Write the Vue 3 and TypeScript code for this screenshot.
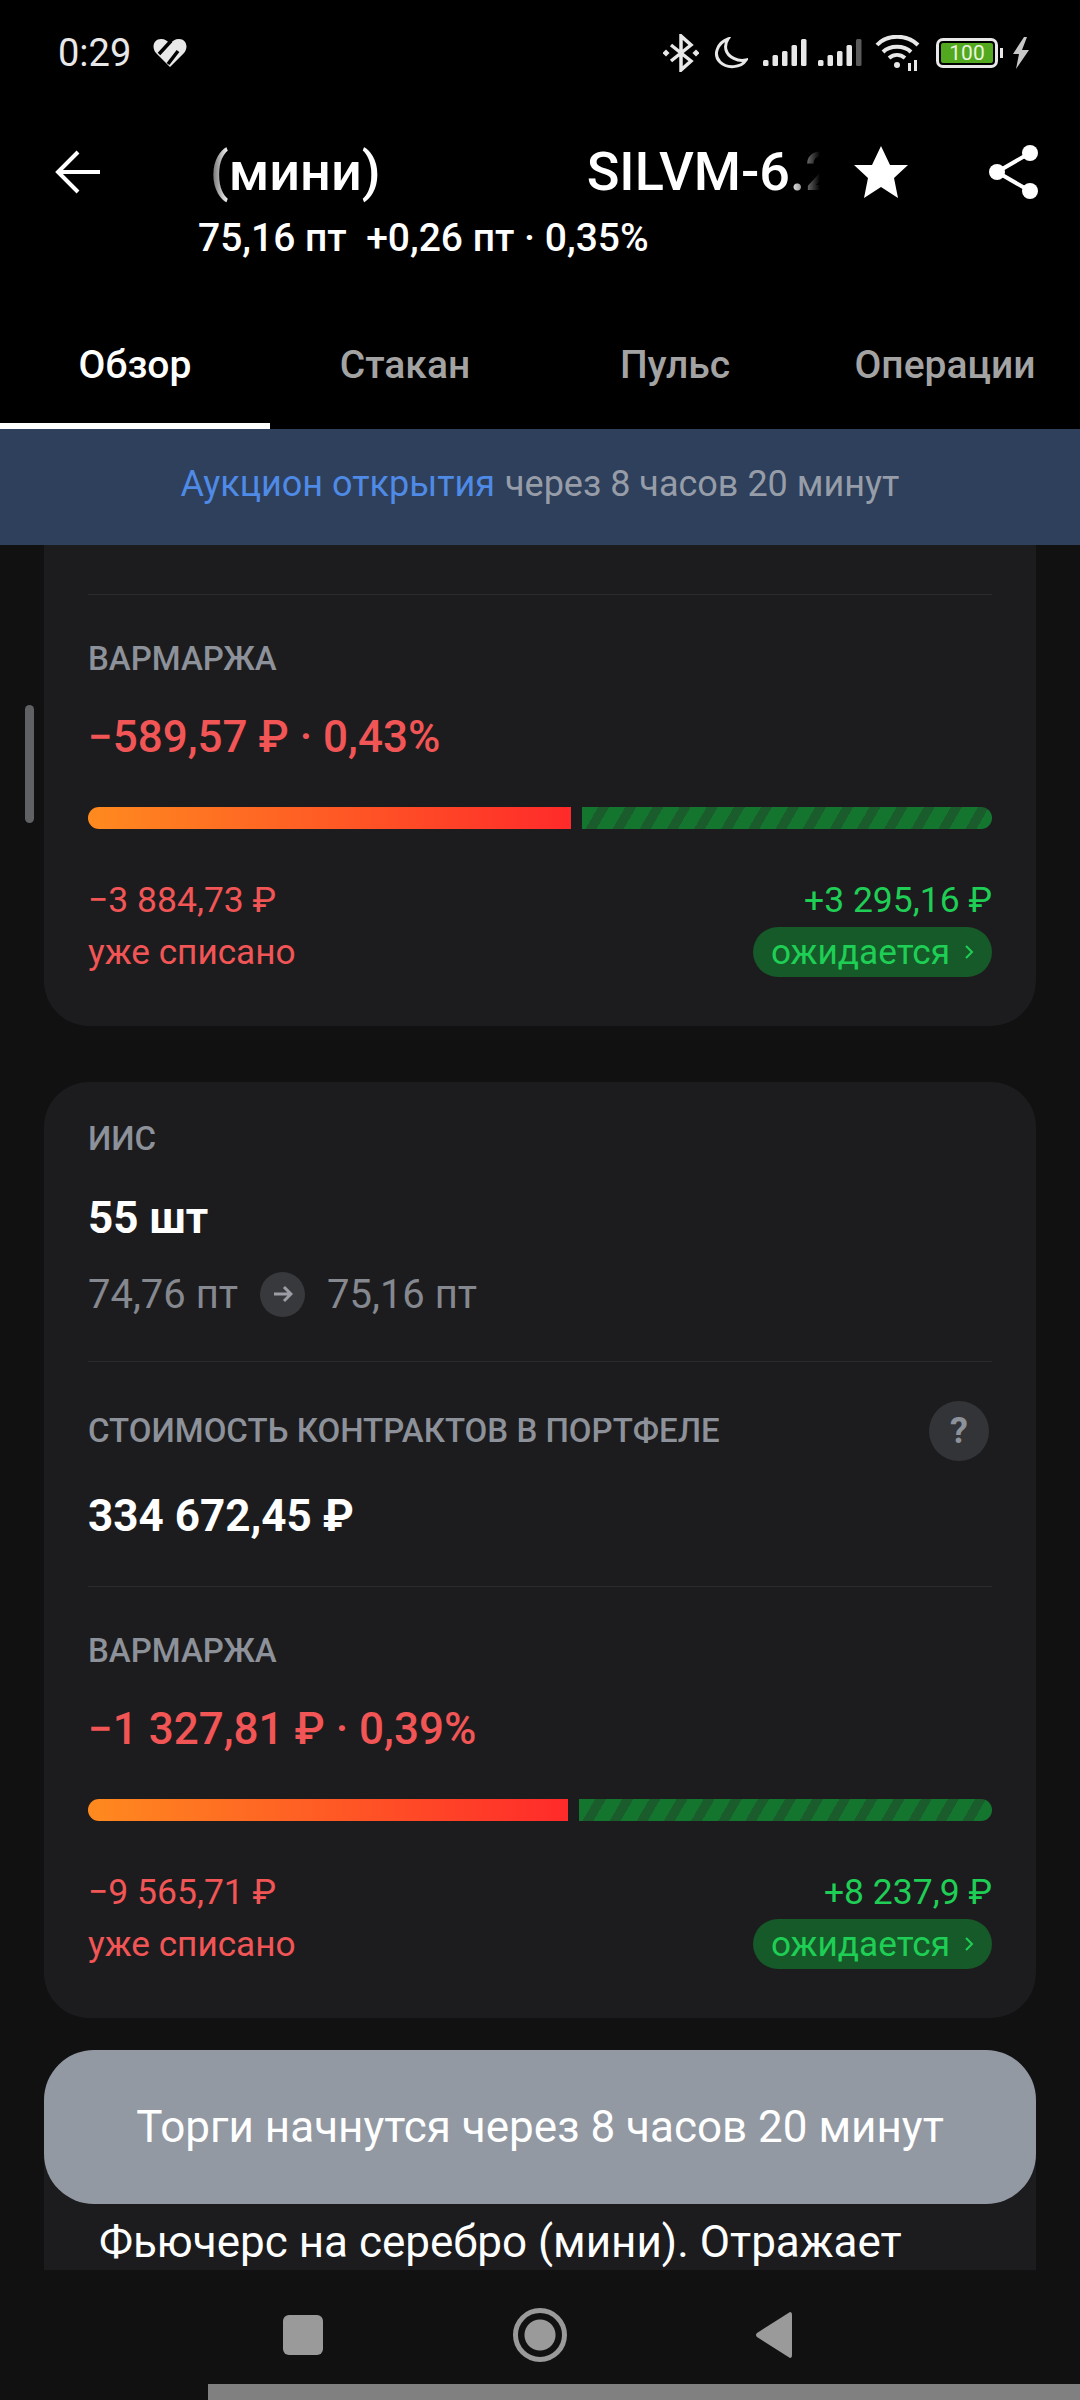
<script setup lang="ts">
interface Margin {
  value: string
  lost: string
  expected: string
  lostWidth: number
}

const tabs = ['Обзор', 'Стакан', 'Пульс', 'Операции']

// bar widths are in px, the green part takes what's left
const firstMargin: Margin = {
  value: '−589,57 ₽ · 0,43%',
  lost: '−3 884,73 ₽',
  expected: '+3 295,16 ₽',
  lostWidth: 483,
}

const secondMargin: Margin = {
  value: '−1 327,81 ₽ · 0,39%',
  lost: '−9 565,71 ₽',
  expected: '+8 237,9 ₽',
  lostWidth: 480,
}

const margins = { first: firstMargin, second: secondMargin }

// signal bars, tallest last
const signalHeights = [6, 11, 15, 21, 27]
</script>

<template>
  <div class="screen">
    <div class="status">
      <div class="status__left">
        <span class="status__time">0:29</span>
        <svg class="status__heart" width="34" height="28" viewBox="0 0 34 28">
          <path fill="#e8e8e8" d="M17 28 L3 14 C-2 8 1 0 8 0 C12 0 15 2 17 5 C19 2 22 0 26 0 C33 0 36 8 31 14 Z" />
          <path fill="none" stroke="#000" stroke-width="3.5" d="M6 15 L18 2 M15 25 L25 12" />
        </svg>
      </div>
      <div class="status__right">
        <svg width="36" height="38" viewBox="0 0 36 38" fill="none" stroke="#e8e8e8" stroke-width="3.5">
          <path d="M8 11 L28 27 L18 36 V2 L28 11 L8 27" />
          <rect x="0.5" y="16.5" width="5" height="5" transform="rotate(45 3 19)" fill="#e8e8e8" stroke="none" />
          <rect x="30.5" y="16.5" width="5" height="5" transform="rotate(45 33 19)" fill="#e8e8e8" stroke="none" />
        </svg>
        <svg width="34" height="32" viewBox="0 0 34 32" fill="none" stroke="#e8e8e8" stroke-width="3">
          <path d="M14 2 C3 6 -1 18 6 25 C13 32 27 31 32 23 C24 25 14 20 12 13 C11 9 12 5 14 2 Z" />
        </svg>
        <svg width="44" height="27" viewBox="0 0 44 27" fill="#e8e8e8">
          <rect v-for="(h, i) in signalHeights" :key="i" :x="i * 9.5" :y="27 - h" width="5.5" :height="h" rx="1.5" />
        </svg>
        <svg class="status__sim2" width="44" height="27" viewBox="0 0 44 27" fill="#e8e8e8">
          <rect
            v-for="(h, i) in signalHeights"
            :key="i"
            :x="i * 9.5"
            :y="27 - h"
            width="5.5"
            :height="h"
            rx="1.5"
            :fill="i === 4 ? '#5a5a5a' : '#e8e8e8'"
          />
        </svg>
        <svg class="status__wifi" width="46" height="36" viewBox="0 0 46 36" fill="none" stroke="#e8e8e8" stroke-width="4">
          <path d="M2 10 C12 -1 32 -1 43 10" />
          <path d="M8 17 C15 10 29 10 36 17" />
          <path d="M14 23 C19 19 25 19 30 23" />
          <circle cx="22" cy="30" r="3" fill="#e8e8e8" stroke="none" />
          <rect x="33" y="28" width="3" height="8" fill="#e8e8e8" stroke="none" />
          <rect x="39" y="25" width="3" height="11" fill="#e8e8e8" stroke="none" />
        </svg>
        <div class="battery">
          <div class="battery__body"><span class="battery__fill">100</span></div>
          <span class="battery__nub"></span>
        </div>
        <svg class="status__bolt" width="18" height="32" viewBox="0 0 18 32" fill="#c8c8c8">
          <path d="M12 0 L1 17 H7 L4 32 L17 13 H10 L15 0 Z" />
        </svg>
      </div>
    </div>

    <header class="header">
      <div class="header__top">
        <svg class="header__back" width="45" height="44" viewBox="0 0 45 44" fill="none" stroke="#fff" stroke-width="4">
          <path d="M23 2 L3 22 L23 42" />
          <path d="M3 22 H45" />
        </svg>
        <div class="header__title">
          <span>(мини)</span>
          <span>SILVM-6.26</span>
        </div>
        <svg class="header__star" width="54" height="52" viewBox="0 0 54 52" fill="#fff">
          <path d="M27 0 L36 19 H54 L40 32 L44 52 L27 41 L10 52 L14 32 L0 19 H18 Z" />
        </svg>
        <svg class="header__share" width="50" height="56" viewBox="0 0 50 56" fill="#fff" stroke="#fff">
          <path d="M41 9 L8 28 L41 47" fill="none" stroke-width="4" />
          <circle cx="41" cy="9" r="8" stroke="none" />
          <circle cx="8" cy="28" r="8" stroke="none" />
          <circle cx="41" cy="47" r="8" stroke="none" />
        </svg>
      </div>
      <div class="header__price">75,16 пт&nbsp; +0,26 пт · 0,35%</div>
    </header>

    <nav class="tabs">
      <div v-for="(tab, i) in tabs" :key="tab" class="tabs__item" :class="{ 'tabs__item--active': i === 0 }">
        {{ tab }}
      </div>
    </nav>

    <div class="banner"><span class="banner__link">Аукцион открытия</span> через 8 часов 20 минут</div>

    <main class="content">
      <span class="scrollbar"></span>

      <section class="card card--first">
        <div class="margin margin--first">
          <div class="label">ВАРМАРЖА</div>
          <div class="margin__value">{{ margins.first.value }}</div>
          <div class="bar">
            <span class="bar__lost" :style="{ width: margins.first.lostWidth + 'px' }"></span>
            <span class="bar__expected"></span>
          </div>
          <div class="margin__row">
            <span class="red">{{ margins.first.lost }}</span>
            <span class="green">{{ margins.first.expected }}</span>
          </div>
          <div class="margin__row margin__row--second">
            <span class="red">уже списано</span>
            <span class="pill">ожидается
              <svg width="10" height="16" viewBox="0 0 10 16" fill="none" stroke="#1fce55" stroke-width="2"><path d="M2 2 L8 8 L2 14" /></svg>
            </span>
          </div>
        </div>
      </section>

      <section class="card">
        <div class="position">
          <div class="label">ИИС</div>
          <div class="position__count">55 шт</div>
          <div class="position__prices">
            <span>74,76 пт</span>
            <span class="position__arrow">
              <svg width="20" height="18" viewBox="0 0 20 18" fill="none" stroke="#9a9da3" stroke-width="3"><path d="M1 9 H18 M11 2 L18 9 L11 16" /></svg>
            </span>
            <span>75,16 пт</span>
          </div>
        </div>
        <div class="cost">
          <div class="cost__head">
            <span class="label">СТОИМОСТЬ КОНТРАКТОВ В ПОРТФЕЛЕ</span>
            <span class="cost__help">?</span>
          </div>
          <div class="cost__value">334 672,45 ₽</div>
        </div>
        <div class="margin margin--first">
          <div class="label">ВАРМАРЖА</div>
          <div class="margin__value">{{ margins.second.value }}</div>
          <div class="bar">
            <span class="bar__lost" :style="{ width: margins.second.lostWidth + 'px' }"></span>
            <span class="bar__expected"></span>
          </div>
          <div class="margin__row">
            <span class="red">{{ margins.second.lost }}</span>
            <span class="green">{{ margins.second.expected }}</span>
          </div>
          <div class="margin__row margin__row--second">
            <span class="red">уже списано</span>
            <span class="pill">ожидается
              <svg width="10" height="16" viewBox="0 0 10 16" fill="none" stroke="#1fce55" stroke-width="2"><path d="M2 2 L8 8 L2 14" /></svg>
            </span>
          </div>
        </div>
      </section>

      <section class="card card--about">
        <p class="about">Фьючерс на серебро (мини). Отражает</p>
      </section>

      <div class="toast">Торги начнутся через 8 часов 20 минут</div>
    </main>

    <footer class="navbar">
      <span class="navbar__square"></span>
      <span class="navbar__circle"></span>
      <svg width="36" height="46" viewBox="0 0 36 46" fill="#9a9a9a">
        <path d="M34 0 Q36 0 36 3 V43 Q36 46 34 46 L1 25 Q-1 23 1 21 Z" />
      </svg>
      <span class="navbar__strip"></span>
    </footer>
  </div>
</template>

<style>
body {
  margin: 0;
  background: #000;
}
</style>

<style scoped>
.screen {
  width: 1080px;
  height: 2400px;
  display: flex;
  flex-direction: column;
  overflow: hidden;
  background: #000;
  color: #fff;
  font-family: Roboto, "Noto Sans", sans-serif;
}

.status {
  height: 105px;
  flex: none;
  display: flex;
  justify-content: space-between;
  align-items: center;
  padding: 0 50px 0 58px;
  box-sizing: border-box;
}

.status__left,
.status__right {
  display: flex;
  align-items: center;
}

.status__time {
  font-size: 38px;
  color: #e8e8e8;
}

.status__heart {
  margin-left: 22px;
}

.status__right {
  gap: 15px;
}

.status__sim2 {
  margin-left: -4px;
}

.status__wifi {
  margin-left: -2px;
}

.status__bolt {
  margin-left: -6px;
}

.battery {
  display: flex;
  align-items: center;
  gap: 2px;
}

.battery__body {
  width: 62px;
  height: 30px;
  box-sizing: border-box;
  border: 3px solid #e8e8e8;
  border-radius: 7px;
  padding: 2px;
  display: flex;
}

.battery__fill {
  flex: 1;
  background: #52a81f;
  border-radius: 2px;
  font-size: 21px;
  line-height: 20px;
  text-align: center;
  color: #e8f5dc;
}

.battery__nub {
  width: 3px;
  height: 10px;
  background: #e8e8e8;
}

.header {
  height: 175px;
  flex: none;
  box-sizing: border-box;
  padding-top: 37px;
}

.header__top {
  height: 60px;
  display: flex;
  align-items: center;
  padding-left: 55px;
}

.header__back {
  flex: none;
}

.header__title {
  width: 621px;
  margin: -2px 0 0 99px;
  padding-left: 11px;
  box-sizing: border-box;
  display: flex;
  gap: 206px;
  overflow: hidden;
  white-space: nowrap;
  font-size: 54px;
  font-weight: 500;
  mask-image: linear-gradient(to right, transparent 0, #000 30px, #000 590px, transparent 621px);
}

.header__star {
  flex: none;
  margin-left: 34px;
}

.header__share {
  flex: none;
  margin-left: 81px;
}

.header__price {
  margin-top: 14px;
  padding-left: 198px;
  font-size: 39px;
  line-height: 44px;
  font-weight: 500;
  white-space: nowrap;
}

.tabs {
  height: 149px;
  flex: none;
  display: grid;
  grid-template-columns: repeat(4, 1fr);
}

.tabs__item {
  padding-top: 62px;
  text-align: center;
  font-size: 39px;
  line-height: 46px;
  font-weight: 500;
  color: #a3a3a3;
  box-sizing: border-box;
}

.tabs__item--active {
  color: #fff;
  border-bottom: 6px solid #fff;
}

.banner {
  height: 116px;
  flex: none;
  box-sizing: border-box;
  padding-bottom: 6px;
  display: flex;
  align-items: center;
  justify-content: center;
  gap: 10px;
  background: #2e405b;
  color: #979da8;
  font-size: 36px;
}

.banner__link {
  color: #4f8ae6;
}

.content {
  flex: 1;
  min-height: 0;
  position: relative;
  overflow: hidden;
  background: #111112;
  display: flex;
  flex-direction: column;
  gap: 56px;
}

.scrollbar {
  position: absolute;
  left: 25px;
  top: 160px;
  width: 9px;
  height: 118px;
  border-radius: 5px;
  background: #606165;
}

.card {
  flex: none;
  margin: 0 44px;
  padding: 0 44px;
  border-radius: 45px;
  background: #1c1c1e;
}

.card--first {
  margin-top: -60px;
  padding-top: 109px;
}

.card--about {
  padding: 148px 0 60px 55px;
  border-radius: 45px 45px 0 0;
}

.label {
  font-size: 33px;
  line-height: 30px;
  font-weight: 500;
  color: #8d9199;
}

.margin,
.cost {
  border-top: 1px solid #2b2b2d;
}

.margin {
  padding: 49px 0 48px;
}

.margin--first {
  padding-bottom: 49px;
}

.margin__value {
  margin-top: 38px;
  font-size: 44px;
  line-height: 50px;
  font-weight: 500;
  color: #f25555;
}

.bar {
  margin-top: 45px;
  height: 22px;
  display: flex;
  gap: 11px;
}

.bar__lost {
  flex: none;
  border-radius: 11px 0 0 11px;
  background: linear-gradient(to right, #ff8a1f, #ff2a2a);
}

.bar__expected {
  flex: 1;
  border-radius: 0 11px 11px 0;
  background: repeating-linear-gradient(120deg, #14752f 0, #14752f 14px, #1a5c2b 14px, #1a5c2b 23.5px);
}

.margin__row {
  margin-top: 51px;
  height: 40px;
  display: flex;
  justify-content: space-between;
  align-items: center;
  font-size: 35.5px;
}

.margin__row--second {
  margin-top: 7px;
  height: 50px;
  font-size: 35.2px;
}

.red {
  color: #f25555;
}

.green {
  color: #1fce55;
}

.pill {
  height: 50px;
  box-sizing: border-box;
  display: flex;
  align-items: center;
  gap: 14px;
  padding: 0 18px;
  border-radius: 25px;
  background: #155a28;
  color: #1fce55;
  font-size: 35.2px;
}

.position {
  padding: 42px 0 47px;
}

.position__count {
  margin-top: 44px;
  font-size: 44px;
  line-height: 40px;
  font-weight: 700;
}

.position__prices {
  margin-top: 36px;
  height: 40px;
  display: flex;
  align-items: center;
  gap: 22px;
  font-size: 40px;
  color: #85888f;
}

.position__arrow {
  width: 45px;
  height: 45px;
  border-radius: 50%;
  background: #38393c;
  display: flex;
  align-items: center;
  justify-content: center;
}

.cost {
  padding: 39px 0 50px;
}

.cost__head {
  height: 60px;
  display: flex;
  justify-content: space-between;
  align-items: center;
}

.cost__help {
  width: 60px;
  height: 60px;
  margin-right: 3px;
  border-radius: 50%;
  background: #333437;
  color: #8d9199;
  font-size: 36px;
  font-weight: 700;
  display: flex;
  align-items: center;
  justify-content: center;
}

.cost__value {
  margin-top: 35px;
  font-size: 44px;
  line-height: 40px;
  font-weight: 700;
}

.about {
  margin: 0;
  font-size: 44px;
  line-height: 40px;
  white-space: nowrap;
}

.toast {
  position: absolute;
  left: 44px;
  right: 44px;
  bottom: 66px;
  height: 154px;
  border-radius: 50px;
  background: #9299a3;
  display: flex;
  align-items: center;
  justify-content: center;
  font-size: 44px;
}

.navbar {
  height: 130px;
  flex: none;
  position: relative;
  box-sizing: border-box;
  background: #111112;
  display: flex;
  align-items: center;
  padding: 0 0 0 283px;
}

.navbar__square {
  width: 40px;
  height: 40px;
  border-radius: 6px;
  background: #9a9a9a;
}

.navbar__circle {
  width: 54px;
  height: 54px;
  margin: 0 189px 0 190px;
  box-sizing: border-box;
  border: 5px solid #9a9a9a;
  border-radius: 50%;
  background: radial-gradient(circle, #9a9a9a 0 15px, transparent 16px);
}

.navbar__strip {
  position: absolute;
  left: 208px;
  right: 0;
  bottom: 0;
  height: 16px;
  background: #808080;
}
</style>
